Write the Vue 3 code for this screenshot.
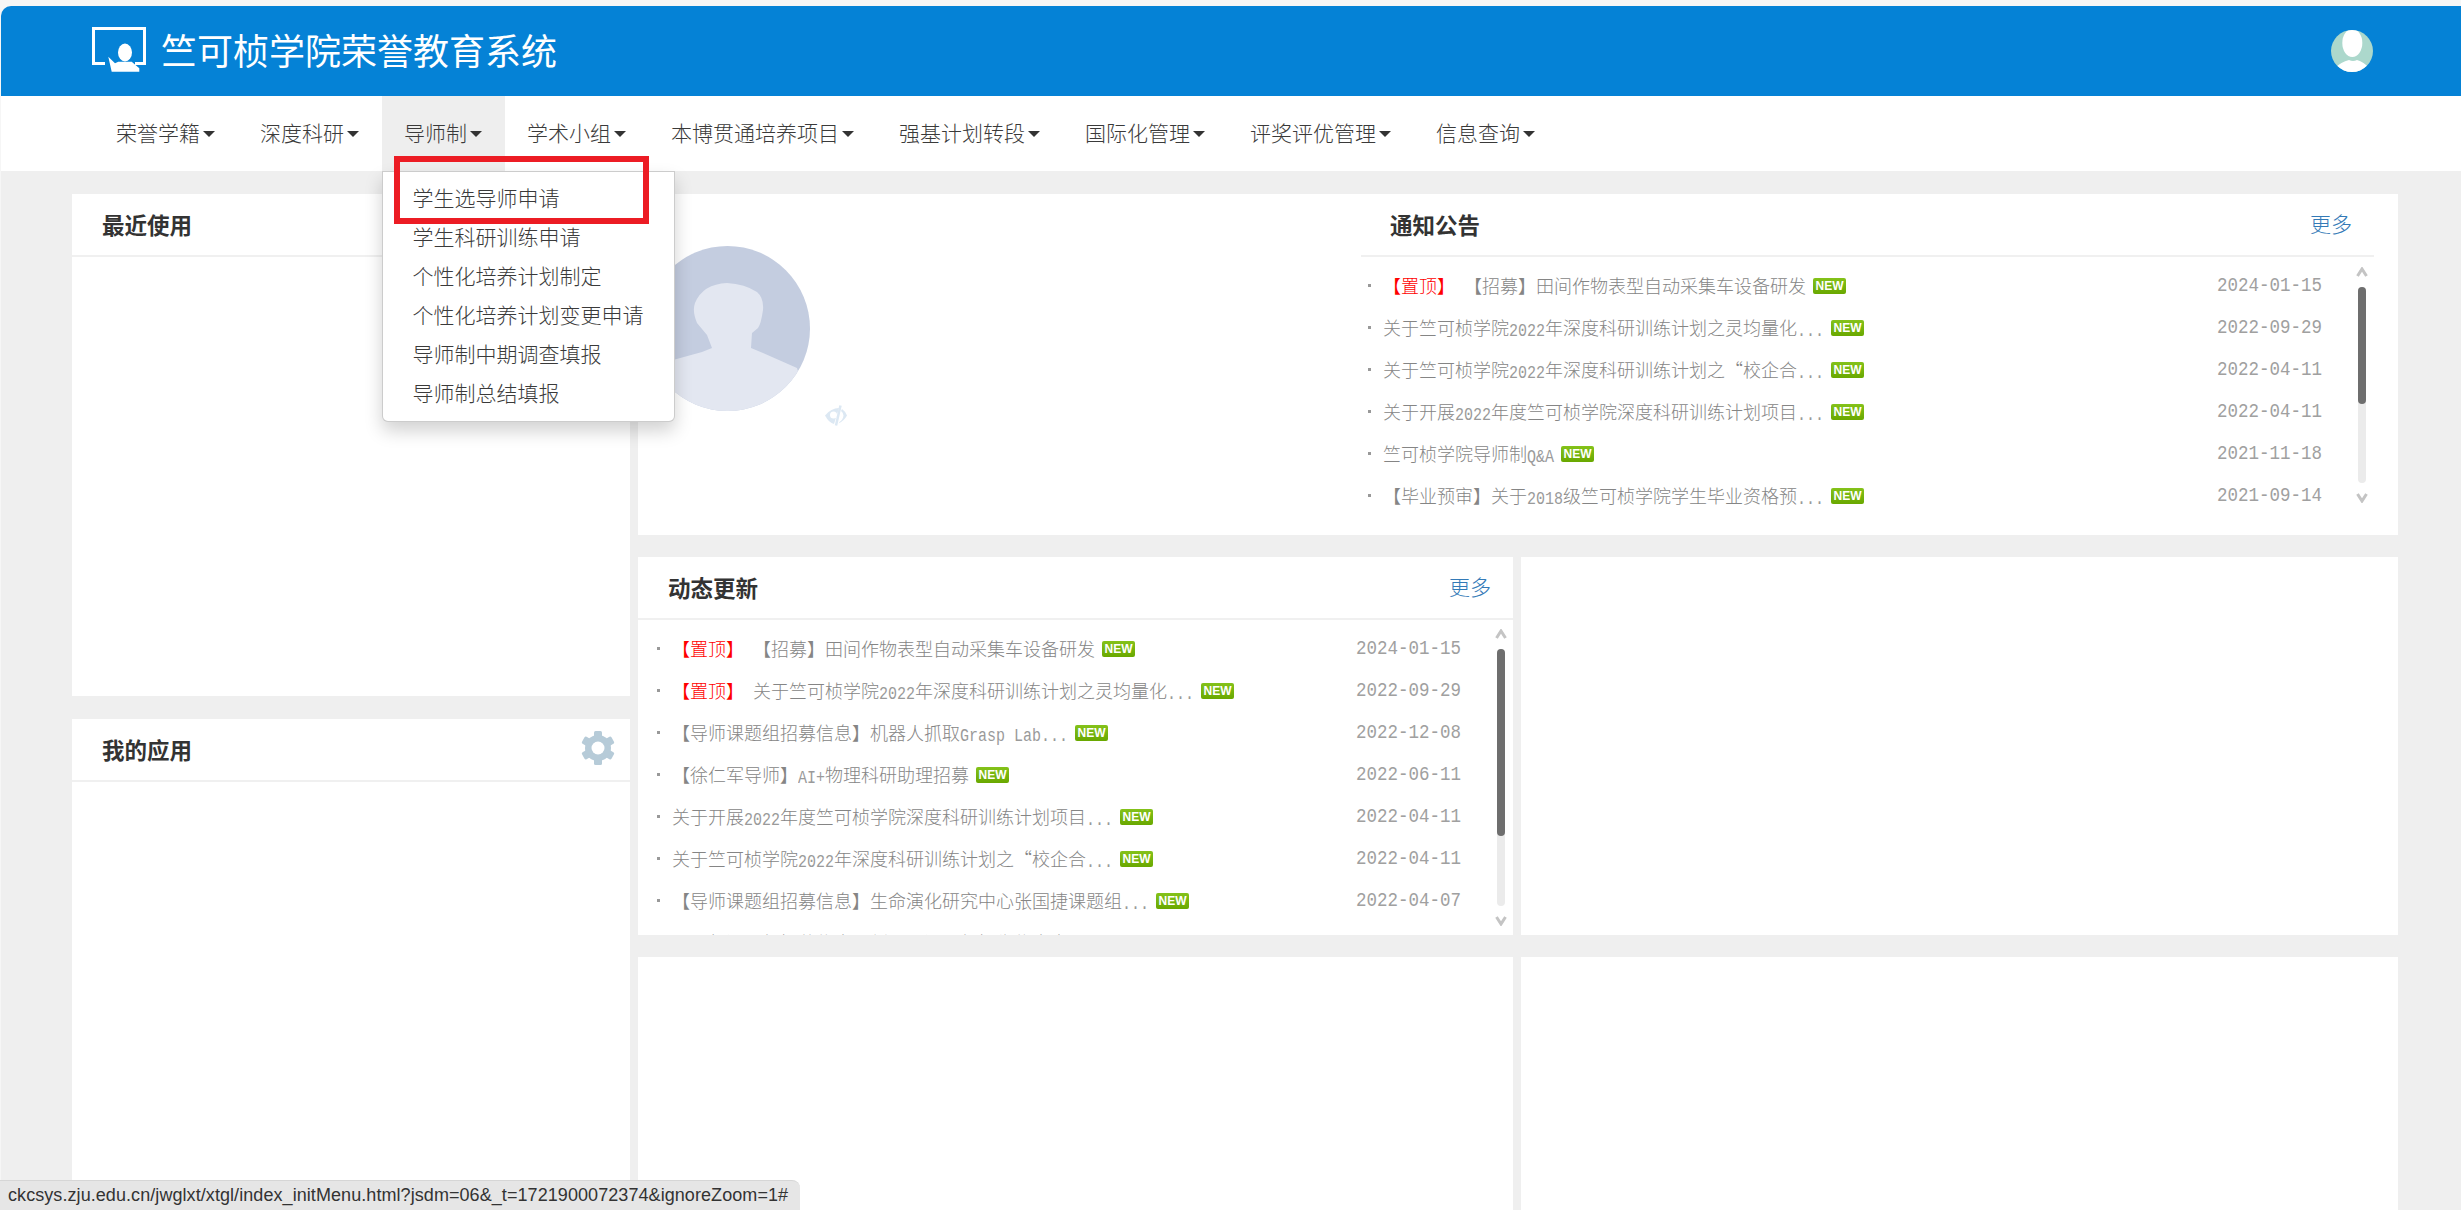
<script setup>
const navItems = ['荣誉学籍', '深度科研', '导师制', '学术小组', '本博贯通培养项目', '强基计划转段', '国际化管理', '评奖评优管理', '信息查询']
const menuItems = ['学生选导师申请', '学生科研训练申请', '个性化培养计划制定', '个性化培养计划变更申请', '导师制中期调查填报', '导师制总结填报']

const notices = [
  { pin: true, title: '【招募】田间作物表型自动采集车设备研发', date: '2024-01-15' },
  { title: '关于竺可桢学院2022年深度科研训练计划之灵均量化...', date: '2022-09-29' },
  { title: '关于竺可桢学院2022年深度科研训练计划之“校企合...', date: '2022-04-11' },
  { title: '关于开展2022年度竺可桢学院深度科研训练计划项目...', date: '2022-04-11' },
  { title: '竺可桢学院导师制Q&A', date: '2021-11-18' },
  { title: '【毕业预审】关于2018级竺可桢学院学生毕业资格预...', date: '2021-09-14' }
]
const updates = [
  { pin: true, title: '【招募】田间作物表型自动采集车设备研发', date: '2024-01-15' },
  { pin: true, title: '关于竺可桢学院2022年深度科研训练计划之灵均量化...', date: '2022-09-29' },
  { title: '【导师课题组招募信息】机器人抓取Grasp Lab...', date: '2022-12-08' },
  { title: '【徐仁军导师】AI+物理科研助理招募', date: '2022-06-11' },
  { title: '关于开展2022年度竺可桢学院深度科研训练计划项目...', date: '2022-04-11' },
  { title: '关于竺可桢学院2022年深度科研训练计划之“校企合...', date: '2022-04-11' },
  { title: '【导师课题组招募信息】生命演化研究中心张国捷课题组...', date: '2022-04-07' },
  { title: '【导师课题组招募信息】刘子晏课题组招生信息表', date: '2022-03-30' }
]

const feeds = [
  { key: 'n', rows: notices, thumb: 117 },
  { key: 'u', rows: updates, thumb: 187 }
]

function segments(text) {
  return text.match(/[\x20-\x7e]+|[^\x20-\x7e]+/g).map((t) => ({ t, lat: /^[\x20-\x7e]/.test(t) }))
}
</script>

<template>
  <div class="page">
    <header class="topbar">
      <svg class="logo" viewBox="0 0 54 45" width="54" height="45">
        <path d="M13 36.5H1.5V1.5H52.5V36.5H43" fill="none" stroke="#fff" stroke-width="3" />
        <ellipse cx="33" cy="25.5" rx="7" ry="9" fill="#fff" />
        <path d="M16.3 29.7L23 36.3L26.3 34.7H39.7L47.3 41.3V44.7H19.7Z" fill="#fff" />
      </svg>
      <h1 class="brand">竺可桢学院荣誉教育系统</h1>
      <svg class="user" viewBox="0 0 42 42" width="42" height="42">
        <defs><clipPath id="uc"><circle cx="21" cy="21" r="21" /></clipPath></defs>
        <circle cx="21" cy="21" r="21" fill="#acd8cc" />
        <g clip-path="url(#uc)" fill="#fff">
          <ellipse cx="21.3" cy="13" rx="10" ry="14" />
          <path d="M4 38Q10 32 18 30Q22 32 26 30Q33 32 38 38L42 42H0Z" />
        </g>
      </svg>
    </header>

    <nav class="nav">
      <div v-for="(item, i) in navItems" :key="item" class="nav-item" :class="{ open: i === 2 }">
        <span>{{ item }}</span><i class="caret"></i>
        <div v-if="i === 2" class="dropdown">
          <div class="mark"></div>
          <div v-for="m in menuItems" :key="m" class="drop-item">{{ m }}</div>
        </div>
      </div>
    </nav>

    <main class="main">
      <aside class="side">
        <section class="card recent">
          <div class="card-head"><h2>最近使用</h2></div>
        </section>
        <section class="card apps">
          <div class="card-head">
            <h2>我的应用</h2>
            <svg class="gear" viewBox="0 0 34 34" width="34" height="34">
              <g fill="#b6cbd8">
                <rect x="13" y="0" width="8" height="34" rx="1.5" />
                <rect x="13" y="0" width="8" height="34" rx="1.5" transform="rotate(60 17 17)" />
                <rect x="13" y="0" width="8" height="34" rx="1.5" transform="rotate(120 17 17)" />
                <circle cx="17" cy="17" r="13" />
              </g>
              <circle cx="17" cy="17" r="6.5" fill="#fff" />
            </svg>
          </div>
        </section>
      </aside>

      <div class="content">
        <section class="card top">
          <div class="profile">
            <svg viewBox="0 0 165 165" width="165" height="165">
              <defs><clipPath id="pc"><circle cx="82.5" cy="82.5" r="82.5" /></clipPath></defs>
              <circle cx="82.5" cy="82.5" r="82.5" fill="#c4cde0" />
              <path clip-path="url(#pc)" fill="#e3e7f1" d="M0 122L28 114L57 106L67 102L62 89L52 77Q47 65 50 57Q58 38 82 37Q100 38 112 46Q119 52 118 64Q116 78 113 82L107 87L106 102L118 107L152 122L165 165H0Z" />
            </svg>
            <svg class="eye" viewBox="0 0 22 21" width="22" height="21">
              <path d="M0 10.500Q6 3 14 3L9 19Q4 18 0 10.500Z" fill="#dce8f3" />
              <circle cx="8.500" cy="10" r="3.500" fill="#fff" />
              <path d="M15.500 0.500L11 20.500" stroke="#dce8f3" stroke-width="2.500" fill="none" />
              <path d="M17 4Q20 6 22 10.500Q19 16 13.500 18.500L14.500 17Q18 14.500 18.500 10.500Q18 7 16 6Z" fill="#dce8f3" />
            </svg>
          </div>
          <div class="panel notice">
            <div class="card-head feed-head"><h2>通知公告</h2><a class="more">更多</a></div>
            <div class="feed">
              <div class="rows">
                <div v-for="(r, i) in feeds[0].rows" :key="i" class="row">
                  <i class="dot"></i>
                  <span class="title"><span v-if="r.pin" class="pin">【置顶】</span><span v-for="(s, j) in segments(r.title)" :key="j" :class="{ lat: s.lat }">{{ s.t }}</span></span>
                  <span class="new">NEW</span>
                  <span class="date">{{ r.date }}</span>
                </div>
              </div>
              <div class="scroll">
                <svg viewBox="0 0 12 10" width="12" height="10"><path d="M1.500 9L6 2L10.500 9" fill="none" stroke="#c4c4c4" stroke-width="3" /></svg>
                <div class="track"><div class="thumb" :style="{ height: feeds[0].thumb + 'px' }"></div></div>
                <svg viewBox="0 0 12 10" width="12" height="10"><path d="M1.500 1L6 8L10.500 1" fill="none" stroke="#c4c4c4" stroke-width="3" /></svg>
              </div>
            </div>
          </div>
        </section>

        <div class="grid">
          <section class="card middle panel">
            <div class="card-head feed-head"><h2>动态更新</h2><a class="more">更多</a></div>
            <div class="feed">
              <div class="rows">
                <div v-for="(r, i) in feeds[1].rows" :key="i" class="row">
                  <i class="dot"></i>
                  <span class="title"><span v-if="r.pin" class="pin">【置顶】</span><span v-for="(s, j) in segments(r.title)" :key="j" :class="{ lat: s.lat }">{{ s.t }}</span></span>
                  <span class="new">NEW</span>
                  <span class="date">{{ r.date }}</span>
                </div>
              </div>
              <div class="scroll">
                <svg viewBox="0 0 12 10" width="12" height="10"><path d="M1.500 9L6 2L10.500 9" fill="none" stroke="#c4c4c4" stroke-width="3" /></svg>
                <div class="track"><div class="thumb" :style="{ height: feeds[1].thumb + 'px' }"></div></div>
                <svg viewBox="0 0 12 10" width="12" height="10"><path d="M1.500 1L6 8L10.500 1" fill="none" stroke="#c4c4c4" stroke-width="3" /></svg>
              </div>
            </div>
          </section>
          <section class="card"></section>
          <section class="card"></section>
          <section class="card"></section>
        </div>
      </div>
    </main>

    <div class="status">ckcsys.zju.edu.cn/jwglxt/xtgl/index_initMenu.html?jsdm=06&amp;_t=1721900072374&amp;ignoreZoom=1#</div>
  </div>
</template>

<style scoped>
.page {
  position: relative;
  width: 2461px;
  height: 1210px;
  overflow: hidden;
  box-sizing: border-box;
  padding: 6px 0 0 1px;
  display: flex;
  flex-direction: column;
  background: #f6f6f6;
  font-family: "Noto Sans CJK SC", "Liberation Sans", sans-serif;
  text-spacing-trim: space-all;
  color: #333;
}
.topbar {
  height: 90px;
  flex: none;
  display: flex;
  align-items: center;
  padding: 0 88px 0 91px;
  background: #0582d6;
  border-top-left-radius: 10px;
}
.logo { flex: none; margin-top: -3px; }
.brand {
  margin: -4px 0 0 15px;
  font-size: 36px;
  font-weight: 400;
  line-height: 1;
  color: #fff;
  flex: 1;
}
.user { flex: none; }
.nav {
  height: 75px;
  flex: none;
  display: flex;
  padding-left: 92.5px;
  background: #fff;
  position: relative;
  z-index: 5;
}
.nav-item {
  position: relative;
  display: flex;
  align-items: center;
  padding: 0 22.5px 3px;
  font-size: 21px;
  color: #3a3a3a;
  font-weight: 300;
}
.nav-item.open { background: #eee; }
.caret {
  margin-left: 3px;
  margin-top: 4px;
  border-top: 6px solid #333;
  border-left: 6px solid transparent;
  border-right: 6px solid transparent;
}
.dropdown {
  position: absolute;
  top: 100%;
  left: 0;
  padding: 7.5px 0;
  background: #fff;
  border: 1px solid rgba(0, 0, 0, 0.2);
  border-radius: 0 0 6px 6px;
  box-shadow: 0 9px 18px rgba(0, 0, 0, 0.18);
  white-space: nowrap;
}
.drop-item {
  height: 39px;
  line-height: 35px;
  padding: 0 30px;
}
.mark {
  position: absolute;
  left: 11px;
  top: -16px;
  width: 255px;
  height: 68px;
  box-sizing: border-box;
  border: 6px solid #ec1c24;
}
.main {
  flex: 1;
  min-height: 0;
  display: flex;
  gap: 8px;
  padding: 23px 0 0 71px;
  background: #efefef;
}
.side {
  width: 558px;
  flex: none;
  display: flex;
  flex-direction: column;
  gap: 23px;
}
.card { background: #fff; overflow: hidden; }
.recent { height: 502px; flex: none; }
.apps { flex: 1; }
.card-head {
  height: 61px;
  border-bottom: 2px solid #f0f0f0;
  display: flex;
  align-items: center;
  justify-content: space-between;
  padding: 0 15px 0 30px;
}
.card-head h2 {
  margin: 0;
  font-size: 22.500px;
  line-height: 1;
  font-weight: 700;
  color: #333;
}
.gear { margin-top: -3px; }
.content {
  width: 1760px;
  flex: none;
  display: flex;
  flex-direction: column;
  gap: 22px;
}
.top {
  height: 341px;
  flex: none;
  display: flex;
}
.profile {
  width: 723px;
  flex: none;
  box-sizing: border-box;
  padding: 52px 0 0 7px;
  display: flex;
  gap: 15px;
  align-items: flex-start;
}
.eye { margin-top: 159px; }
.notice { width: 1013px; flex: none; }
.feed-head { padding: 0 22px 0 29px; }
.grid {
  display: grid;
  grid-template-columns: 875px 877px;
  grid-template-rows: 378px 300px;
  gap: 22px 8px;
}
.middle .feed-head { padding: 0 22px 0 30px; }
.more {
  font-size: 21px;
  line-height: 1;
  color: #337ab7;
  font-weight: 300;
  margin-top: -3px;
}
.feed {
  display: flex;
  overflow: hidden;
}
.notice .feed { height: 265px; }
.middle .feed { height: 320px; }
.rows {
  flex: 1;
  min-width: 0;
  padding-top: 7px;
}
.notice .rows { padding-left: 7px; }
.middle .rows { padding-left: 19px; }
.row {
  height: 42px;
  display: flex;
  align-items: center;
  font-size: 18px;
  font-weight: 300;
  color: #858585;
  white-space: pre;
}
.dot {
  width: 3px;
  height: 3px;
  margin-right: 12px;
  background: #999;
  flex: none;
}
.pin { color: #f00; margin-right: 9px; }
.lat {
  display: inline-block;
  font-family: "Liberation Mono", monospace;
  font-size: 15px;
  color: #9a9a9a;
  transform: scaleY(1.2);
}
.new {
  margin: 2px 0 0 7px;
  width: 33px;
  height: 16px;
  flex: none;
  border-radius: 2px;
  background: linear-gradient(#84c21a, #69a800);
  color: #fff;
  font-family: "Liberation Sans", sans-serif;
  font-size: 12px;
  font-weight: 700;
  line-height: 16px;
  text-align: center;
}
.date {
  margin-left: auto;
  width: 105px;
  font-family: "Liberation Mono", monospace;
  font-size: 17.500px;
  color: #a0a0a0;
  flex: none;
  transform: scaleY(1.2);
}
.scroll {
  width: 12px;
  flex: none;
  margin: 10px 6px 0 34px;
  height: 236px;
  display: flex;
  flex-direction: column;
  align-items: center;
  gap: 10px;
}
.middle .scroll { margin-top: 9px; height: 297px; }
.track {
  flex: 1;
  width: 8px;
  border-radius: 4px;
  background: #ebebeb;
}
.thumb {
  border-radius: 4px;
  background: #6e6e6e;
}
.status {
  position: absolute;
  left: 0;
  bottom: 0;
  width: 800px;
  height: 30px;
  box-sizing: border-box;
  padding-left: 8px;
  background: #e6e6e6;
  border-top: 1px solid #d6d6d6;
  border-top-right-radius: 8px;
  font-family: "Liberation Sans", sans-serif;
  font-size: 18px;
  letter-spacing: 0.07px;
  line-height: 29px;
  color: #333;
  white-space: nowrap;
  z-index: 6;
}
</style>

<style>
html, body { margin: 0; background: #f6f6f6; }
</style>
